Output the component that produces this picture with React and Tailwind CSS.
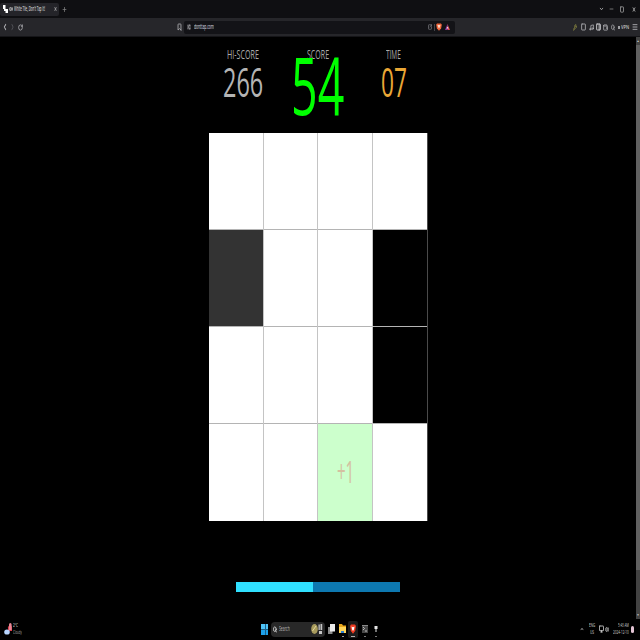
import { useLayoutEffect, useRef, useState } from "react";
import {
  Bookmark, ChevronDown, ChevronLeft, ChevronRight, ChevronUp, Menu, Minus, Monitor,
  Music, PanelRight, Plus, RotateCw, Search, SlidersHorizontal, SquareArrowOutUpRight, Square, Volume2, Wallet, X, Wrench,
} from "lucide-react";

// A line of condensed text, squeezed horizontally into its box.
function Fit({ width, className = "", children }) {
  const ref = useRef(null);
  const [scale, setScale] = useState(0.6);
  useLayoutEffect(() => {
    setScale(width / ref.current.offsetWidth);
  }, [width]);
  return (
    <div className={`flex shrink-0 whitespace-nowrap ${className}`} style={{ width }}>
      <span ref={ref} className="shrink-0 origin-left" style={{ transform: `scaleX(${scale})` }}>
        {children}
      </span>
    </div>
  );
}

function Icon({ as: Glyph, className }) {
  return <Glyph preserveAspectRatio="none" strokeWidth={3} className={`shrink-0 ${className}`} />;
}

function TabBar() {
  return (
    <div className="flex h-[18px] items-center bg-[#0f0f12]">
      <div className="flex h-[13px] w-[59px] items-center rounded-[2px] bg-[#242429] pl-[3px]">
        <svg className="h-[8px] w-[5px] shrink-0" viewBox="0 0 5 8">
          <path fill="#fff" d="M0 0h2.5v4H0zM2.5 4H5v4H2.5zM1 4h1.5v2H1z" />
        </svg>
        <Icon as={Volume2} className="ml-px h-[6px] w-[4px] text-[#d0d0d0]" />
        <Fit width={31} className="ml-px text-[6.5px] font-medium leading-[8px] text-[#e8e8e8]">White Tile, Don't Tap It!</Fit>
        <Icon as={X} className="ml-[9px] h-[6px] w-[3px] text-[#c8c8c8]" />
      </div>
      <Icon as={Plus} className="ml-[3px] h-[7px] w-[5px] text-[#808080]" />
      <Icon as={ChevronDown} className="ml-[532px] h-[6px] w-[5px] text-[#d0d0d0]" />
      <Icon as={Minus} className="ml-[5px] h-[6px] w-[5px] text-[#a0a0a0]" />
      <Icon as={Square} className="ml-[6px] h-[7px] w-[4px] text-[#b0b0b0]" />
      <Icon as={X} className="ml-[8px] h-[7px] w-[4px] text-[#c0c0c0]" />
    </div>
  );
}

function Toolbar() {
  return (
    <div className="flex h-[19px] items-center border-b border-[#151518] bg-[#26262a] text-[#b4b4b8]">
      <Icon as={ChevronLeft} className="ml-[2px] h-[10px] w-[6px]" />
      <Icon as={ChevronRight} className="ml-[2px] h-[10px] w-[5px] text-[#55555a]" />
      <Icon as={RotateCw} className="ml-[3px] h-[7px] w-[5px]" />
      <Icon as={Bookmark} className="ml-[154px] h-[8px] w-[5px]" />
      <div className="ml-[2px] flex h-[13px] w-[271px] shrink-0 items-center rounded-[2px] bg-[#131317]">
        <Icon as={SlidersHorizontal} className="ml-[3px] h-[6px] w-[4px]" />
        <Fit width={20} className="ml-[3px] text-[6.5px] font-medium leading-[8px] text-[#dedee2]">donttap.com</Fit>
        <Icon as={SquareArrowOutUpRight} className="ml-[214px] h-[6px] w-[4px] text-[#85858a]" />
        <div className="ml-[2px] h-[7px] w-px shrink-0 bg-[#444449]" />
        <svg className="ml-px h-[8px] w-[6px] shrink-0" viewBox="0 0 6 8">
          <path fill="#f0653b" d="M1 .5h4l.8 1.2-.7 3.8L3 7.7.9 5.5.2 1.700z" />
          <path fill="#ffd9c6" d="M1.500 2h3L3.900 4 3 5.500 2.100 4z" />
        </svg>
        <svg className="ml-[3px] h-[6px] w-[5px] shrink-0" viewBox="0 0 5 6">
          <path fill="#e04a4a" d="M2.500 0 5 6H2.500z" />
          <path fill="#8b35a0" d="M2.500 0 0 6h2.500z" />
          <path fill="#f7f0f5" d="m2.500 2.500 1 2h-2z" />
        </svg>
      </div>
      <Icon as={Wrench} className="ml-[118px] h-[7px] w-[4px] text-[#8e8b43]" />
      <Icon as={Square} className="ml-[4px] h-[8px] w-[5px]" />
      <Icon as={Music} className="ml-[3px] h-[7px] w-[5px]" />
      <Icon as={PanelRight} className="ml-[2px] h-[8px] w-[5px] text-[#e0e0e4]" />
      <Icon as={Wallet} className="ml-[2px] h-[7px] w-[5px]" />
      <Icon as={Search} className="ml-[3px] h-[7px] w-[4px]" />
      <div className="ml-[3px] h-[3px] w-[2px] shrink-0 bg-[#a0a0a4]" />
      <Fit width={8} className="ml-px text-[5.500px] font-semibold leading-[8px] text-[#c8c8cc]">VPN</Fit>
      <Icon as={Menu} className="ml-[3px] h-[8px] w-[6px]" />
    </div>
  );
}

const LABEL = "text-[12.5px] leading-[13px] text-[#aaaaaa]";

function ScoreBoard() {
  return (
    <div className="flex h-[96px] pl-[209px] pt-[11px]">
      <div className="flex w-[67px] flex-col items-center">
        <Fit width={32} className={LABEL}>HI-SCORE</Fit>
        <Fit width={40} className="text-[41px] font-normal leading-[40px] text-[#b4b4b4]">266</Fit>
      </div>
      <div className="flex w-[84px] flex-col items-center">
        <Fit width={22} className={LABEL}>SCORE</Fit>
        <Fit width={53} className="-mt-[17px] mr-[2px] text-[80px] font-medium leading-[80px] text-[#00ff00]">54</Fit>
      </div>
      <div className="flex w-[67px] flex-col items-center">
        <Fit width={15} className={LABEL}>TIME</Fit>
        <Fit width={26} className="text-[41px] font-normal leading-[40px] text-[#eba836]">07</Fit>
      </div>
    </div>
  );
}

const TILES = [
  "white", "white", "white", "white",
  "gray", "white", "white", "black",
  "white", "white", "white", "black",
  "white", "white", "hit", "white",
];

const TILE_COLORS = {
  white: "bg-white",
  gray: "bg-[#333333]",
  black: "bg-black",
  hit: "bg-[#ccffcc]",
};

function Board() {
  return (
    <div className="ml-[209px] grid h-[388px] w-[219px] grid-cols-[54px_53px_54px_54px] grid-rows-[97px_97px_97px_97px] gap-x-px border-r border-[#4a4a4a] bg-[#c4c4c4]">
      {TILES.map((kind, i) => (
        <div key={i} className={`flex items-center justify-center ${i < 12 ? "border-b border-[#b4b4b4]" : ""} ${TILE_COLORS[kind]}`}>
          {kind === "hit" && (
            <Fit width={17} className="-mt-[4px] text-[31px] font-normal leading-[30px] text-[#d4c0a0]">+1</Fit>
          )}
        </div>
      ))}
    </div>
  );
}

function Taskbar() {
  return (
    <div className="flex h-[21px] items-center bg-black pb-px">
      <svg className="ml-[4px] h-[12px] w-[8px] shrink-0" viewBox="0 0 8 12">
        <path d="M4 6a2 2.500 0 0 1 4-2v4H4z" fill="#d93f4f" />
        <path d="M5 1.500a1.300 1.500 0 0 1 2.600 0V7H5z" fill="#e98794" />
        <ellipse cx="3" cy="9" rx="2.800" ry="2.600" fill="#b9d6ff" />
      </svg>
      <div className="ml-px w-[12px] text-[5.500px] leading-[7px]">
        <Fit width={5} className="text-[#d6d6d6]">2°C</Fit>
        <Fit width={9} className="text-[#a5a5a5]">Cloudy</Fit>
      </div>
      <div className="ml-[236px] grid h-[11px] w-[7px] shrink-0 grid-cols-2 grid-rows-2">
        <div className="bg-[#4fc3f7]" /><div className="border-l border-[#1b5f86] bg-[#4fc3f7]" />
        <div className="border-t border-[#1b5f86] bg-[#1da1ea]" /><div className="border-l border-t border-[#1b5f86] bg-[#1da1ea]" />
      </div>
      <div className="ml-[3px] flex h-[15px] w-[54px] shrink-0 items-center rounded-[4px] bg-[#282828]">
        <Icon as={Search} className="ml-[2px] h-[7px] w-[4px] text-white" />
        <Fit width={11} className="ml-[2px] text-[6.5px] leading-[8px] text-[#bcbcbc]">Search</Fit>
        <svg className="ml-[21px] h-[12px] w-[12px] shrink-0" viewBox="0 0 12 12">
          <ellipse cx="3.500" cy="6" rx="3.300" ry="5" fill="#a79a5c" />
          <path d="m1.500 8 3.500-5" stroke="#e3d79a" strokeWidth="1" />
          <path d="M7.500 1.500h1.300V7H7.500zM9.500 1h1.700v6H9.500zM8 8h3v3H8z" fill="#c5c5c5" />
        </svg>
      </div>
      <svg className="ml-[3px] h-[10px] w-[7px] shrink-0" viewBox="0 0 7 10">
        <path fill="#8a8a8a" d="M0 3h4.500v7H0z" />
        <path fill="#ececec" d="M2 0h5v7.500H2z" />
      </svg>
      <div className="ml-[4px] flex w-[7px] shrink-0 flex-col items-center pt-[3px]">
        <svg className="h-[10px] w-[7px]" viewBox="0 0 7 10">
          <path fill="#e9a71c" d="M0 0h3l1 1.500h3V5H0z" />
          <path fill="#ffd65b" d="M0 3h7v6H0z" />
          <path fill="#2f7fd2" d="M2 7h3v2H2z" />
        </svg>
        <div className="mt-[2px] h-px w-[2px] bg-[#999]" />
      </div>
      <div className="ml-[2px] flex h-[17px] w-[10px] shrink-0 flex-col items-center rounded-[2px] bg-[#1c1c1c] pt-[3px]">
        <svg className="h-[10px] w-[6px]" viewBox="0 0 6 10">
          <path fill="#f03a20" d="M1 .5h4l1 1.500-.8 5L3 9.800.8 7 0 2z" />
          <path fill="#fff" d="m1.500 2.500 1.500.7 1.500-.7-.5 3-1 1.500-1-1.500z" />
        </svg>
        <div className="mt-[2px] h-px w-[4px] bg-[#b0b0b0]" />
      </div>
      <div className="ml-[4px] flex w-[6px] shrink-0 flex-col items-center pt-[3px]">
        <svg className="h-[10px] w-[6px]" viewBox="0 0 6 10">
          <path fill="#484848" d="M0 1h6v8H0z" />
          <path d="m1 3 1.500 1.500L1 6M3 7h2" fill="none" stroke="#d5d5d5" strokeWidth=".8" />
          <path fill="#888" d="M0 1h6v1H0z" />
        </svg>
        <div className="mt-[2px] h-px w-[2px] bg-[#777]" />
      </div>
      <div className="ml-[6px] flex w-[4px] shrink-0 flex-col items-center pt-[3px]">
        <svg className="h-[10px] w-[4px]" viewBox="0 0 4 10">
          <path fill="#e5e5e5" d="M.5 2h3v3h-1v3h-1V5h-1z" />
        </svg>
        <div className="mt-[2px] h-px w-[2px] bg-[#777]" />
      </div>
      <Icon as={ChevronUp} className="ml-[202px] h-[6px] w-[4px] text-[#d8d8d8]" />
      <div className="ml-[5px] w-[8px] shrink-0 text-[5.500px] leading-[7px] text-[#d0d0d0]">
        <Fit width={6}>ENG</Fit>
        <Fit width={4} className="ml-px">US</Fit>
      </div>
      <Icon as={Monitor} className="ml-[2px] h-[8px] w-[5px] text-[#d8d8d8]" />
      <Icon as={Volume2} className="ml-px h-[7px] w-[4px] text-[#bdbdbd]" />
      <div className="ml-[3px] flex w-[17px] shrink-0 flex-col items-end text-[5.500px] leading-[7px] text-[#d0d0d0]">
        <Fit width={11}>5:43 AM</Fit>
        <Fit width={16}>2024-12-10</Fit>
      </div>
      <div className="ml-[2px] h-[7px] w-[3px] shrink-0 rounded-full bg-[#e3c4d4]" />
    </div>
  );
}

export default function App() {
  return (
    <div className="flex h-[640px] w-[640px] flex-col overflow-hidden bg-black font-['Open_Sans','Noto_Sans',sans-serif]">
      <TabBar />
      <Toolbar />
      <div className="flex h-[582px]">
        <main className="w-[636px]">
          <ScoreBoard />
          <Board />
          <div className="ml-[236px] mt-[61px] flex h-[10px] w-[164px]">
            <div className="w-[77px] bg-[#30e0ff]" />
            <div className="flex-1 bg-[#0d78b0]" />
          </div>
        </main>
        <div className="flex w-[4px] flex-col items-center bg-[#424242]">
          <div className="flex h-[8px] items-center text-[3px] leading-none text-[#d0d0d0]">▲</div>
          <div className="h-[525px] w-full bg-[#606060]" />
          <div className="mt-auto flex h-[8px] items-center text-[3px] leading-none text-[#d0d0d0]">▼</div>
        </div>
      </div>
      <Taskbar />
    </div>
  );
}
